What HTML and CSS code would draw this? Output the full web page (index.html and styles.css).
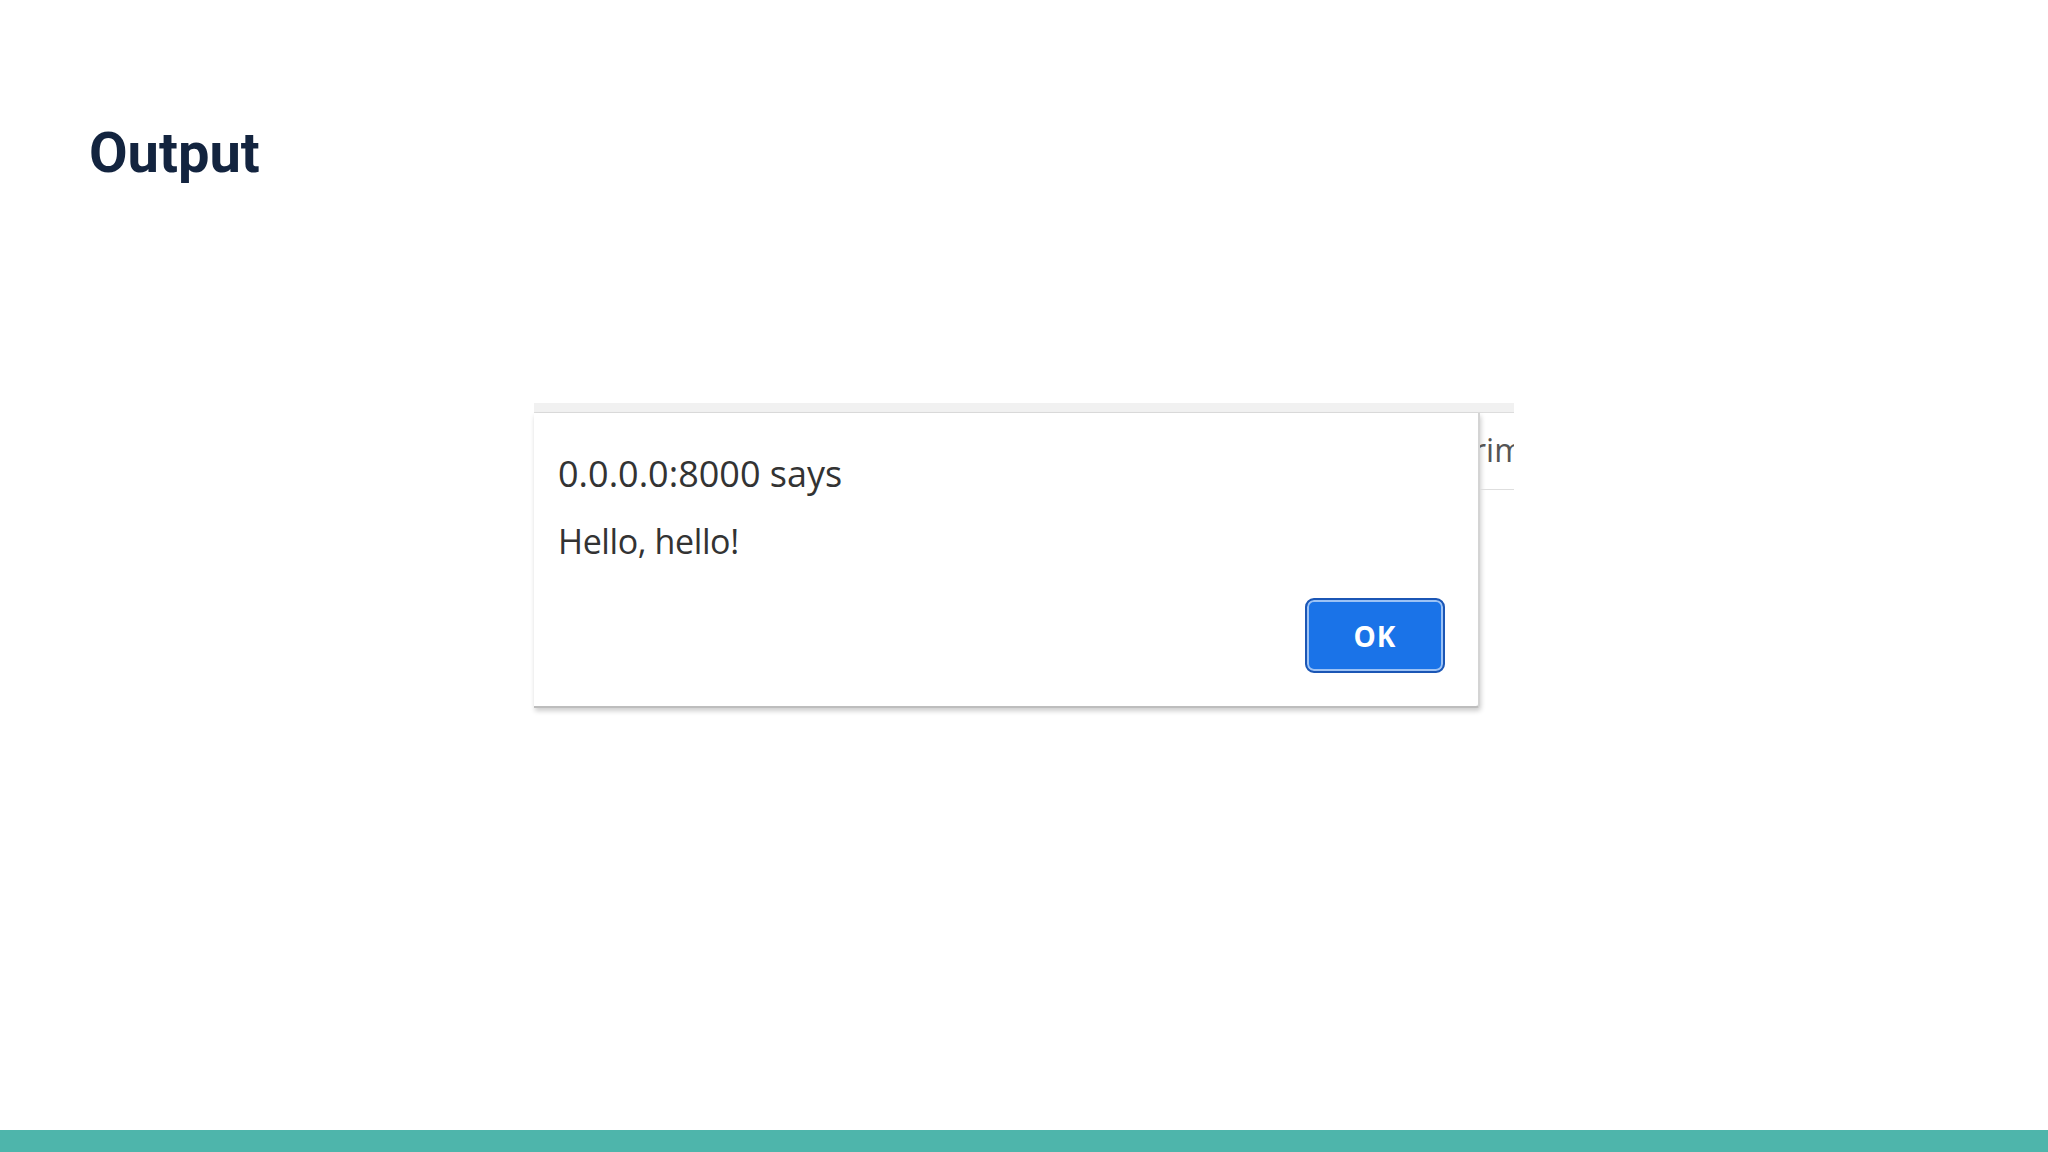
FILE: index.html
```html
<!DOCTYPE html>
<html lang="en">

<head>
    <meta charset="UTF-8">
    <meta name="viewport" content="width=device-width, initial-scale=1.0">
    <title>Output</title>
    <link rel="stylesheet" href="styles.css">
</head>

<body>
    <div class="slide">
        <h1 class="slide-title">Output</h1>

        <div class="shot">
            <div class="shot-top"></div>
            <div class="shot-row">
                <div class="dialog">
                    <div class="dialog-title">0.0.0.0:8000 says</div>
                    <div class="dialog-msg">Hello, hello!</div>
                    <div class="dialog-actions">
                        <button class="ok-btn">OK</button>
                    </div>
                </div>
                <div class="page-peek">
                    <div class="peek-text">rim</div>
                </div>
            </div>
        </div>

        <div class="footer-bar"></div>
    </div>
</body>

</html>
```

FILE: styles.css
```css
body {
    margin: 0;
    background: #ffffff;
    font-family: Roboto, "Liberation Sans", sans-serif;
}

.slide {
    height: 1152px;
    display: flex;
    flex-direction: column;
}

.slide-title {
    margin: 125px 0 0 89px;
    font-size: 56px;
    line-height: 1;
    font-weight: 700;
    color: #13243f;
}

/* screenshot of the browser alert */
.shot {
    width: 980px;
    margin: 222px auto 0;
    font-family: "Open Sans", "DejaVu Sans", sans-serif;
}

.shot-top {
    height: 9px;
    background: #f1f1f1;
    border-bottom: 1px solid #dddddd;
}

.shot-row {
    display: flex;
}

.dialog {
    width: 946px;
    height: 295px;
    box-sizing: border-box;
    padding: 43px 33px 0 24px;
    background: #ffffff;
    border-right: 2px solid #d4d4d4;
    border-bottom: 2px solid #bdbdbd;
    border-bottom-right-radius: 4px;
    box-shadow: 1px 3px 5px rgba(0, 0, 0, 0.2);
    color: #333333;
}

.dialog-title {
    font-size: 36px;
    line-height: 36px;
}

.dialog-msg {
    margin-top: 31px;
    font-size: 34px;
    line-height: 36px;
    letter-spacing: -0.4px;
}

.dialog-actions {
    display: flex;
    justify-content: flex-end;
    margin-top: 39px;
}

.ok-btn {
    width: 140px;
    height: 75px;
    border: 2px solid #1b56b5;
    border-radius: 9px;
    background: #1a73e8;
    box-shadow: inset 0 0 0 2px #9cc2f5;
    color: #ffffff;
    font-family: "Open Sans", "DejaVu Sans", sans-serif;
    font-size: 28px;
    font-weight: 700;
    letter-spacing: 1px;
}

.page-peek {
    width: 34px;
    overflow: hidden;
}

.peek-text {
    height: 76px;
    margin-left: -7px;
    border-bottom: 1px solid #dedede;
    font-size: 32px;
    line-height: 74px;
    color: #555555;
    white-space: nowrap;
}

.footer-bar {
    margin-top: auto;
    height: 22px;
    background: #4eb5ab;
}
```
